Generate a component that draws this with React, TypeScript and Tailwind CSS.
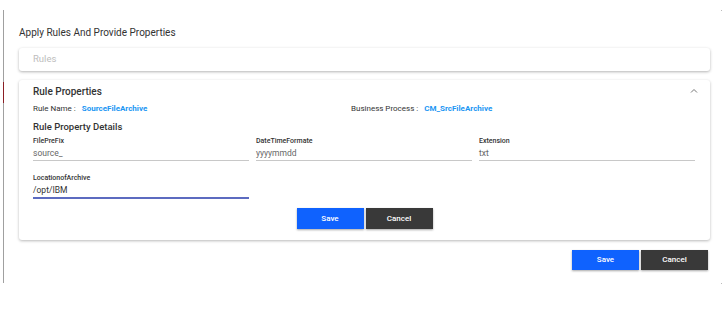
import React from "react";

function Field({ label, value, active }: { label: string; value: string; active?: boolean }) {
  return (
    <div
      className={
        "flex flex-col pb-[2px] " +
        (active ? "border-b-2 border-[#5c6bc0]" : "border-b border-[#c8c8c8]")
      }
    >
      <span className="text-[7px] leading-[9px] text-[#333] font-medium">{label}</span>
      <span
        className={
          "mt-[2px] text-[8.5px] leading-[10px] " + (active ? "text-[#333]" : "text-[#666]")
        }
      >
        {value}
      </span>
    </div>
  );
}

function Btn({ kind, children, h }: { kind: "save" | "cancel"; children: React.ReactNode; h: string }) {
  return (
    <button
      className={
        "w-[67px] flex items-center justify-center text-[8px] font-medium text-white shadow-[0_1px_2px_rgba(0,0,0,0.35)] " +
        h +
        " " +
        (kind === "save" ? "bg-[#0f62fe]" : "bg-[#393939]")
      }
    >
      {children}
    </button>
  );
}

export default function App() {
  return (
    <div
      className="relative w-[724px] h-[311px] bg-white overflow-hidden"
      style={{ fontFamily: "Roboto, 'Liberation Sans', sans-serif" }}
    >
      <div className="absolute left-[3px] top-[82px] w-[1px] h-[21px] bg-[#8b1e24]" />
      <div className="absolute left-[721px] top-[10px] w-[1px] h-[1px] bg-[#bbb]" />
      <div className="absolute left-[721px] top-[283px] w-[1px] h-[1px] bg-[#bbb]" />
      <div className="ml-[3px] mt-[10px] h-[273px] w-[719px] border-l border-[#a0a0a0] pl-[15px] pr-[12px] pt-[17px] flex flex-col">
        <div className="text-[10px] leading-[12px] text-[#333]">Apply Rules And Provide Properties</div>

        <div className="mt-[9px] h-[23px] rounded-[3px] bg-white shadow-[0_1px_3px_rgba(0,0,0,0.3)] px-[14px] flex items-center">
          <span className="text-[9.5px] text-[#bdbdbd]">Rules</span>
        </div>

        <div className="relative mt-[9px] h-[160px] rounded-[3px] bg-white shadow-[0_1px_3px_rgba(0,0,0,0.28)] px-[14px] pt-[6px]">
          <svg
            className="absolute right-[12px] top-[8px]"
            width="8"
            height="6"
            viewBox="0 0 8 6"
            fill="none"
          >
            <path d="M1 4.5 L4 1.5 L7 4.5" stroke="#777" strokeWidth="1" />
          </svg>
          <div className="text-[10px] leading-[12px] font-medium text-[#333]">Rule Properties</div>
          <div className="mt-[6px] flex text-[8px] leading-[10px]">
            <div className="w-[318px] flex">
              <span className="text-[#333]">Rule Name :</span>
              <span className="ml-[6px] text-[#2196f3] font-bold">SourceFileArchive</span>
            </div>
            <div className="flex">
              <span className="text-[#333]">Business Process :</span>
              <span className="ml-[6px] text-[#2196f3] font-bold">CM_SrcFileArchive</span>
            </div>
          </div>
          <div className="mt-[7px] text-[9.5px] leading-[12px] font-medium text-[#333]">Rule Property Details</div>
          <div className="mt-[4px] w-[662px] grid grid-cols-3 gap-x-[7px] gap-y-[13px]">
            <Field label="FilePreFix" value="source_" />
            <Field label="DateTimeFormate" value="yyyymmdd" />
            <Field label="Extension" value="txt" />
            <Field label="LocationofArchive" value="/opt/IBM" active />
          </div>
          <div className="mt-[9px] flex justify-center gap-[2px]">
            <Btn kind="save" h="h-[21px]">Save</Btn>
            <Btn kind="cancel" h="h-[21px]">Cancel</Btn>
          </div>
        </div>

        <div className="mt-[10px] flex justify-end gap-[2px] pr-[2px]">
          <Btn kind="save" h="h-[20px]">Save</Btn>
          <Btn kind="cancel" h="h-[20px]">Cancel</Btn>
        </div>
      </div>
    </div>
  );
}
